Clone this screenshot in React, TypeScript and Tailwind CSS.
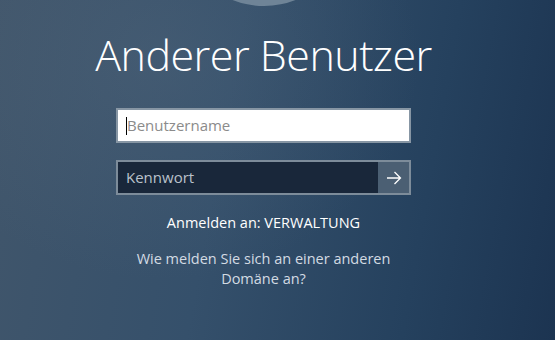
import React from 'react';

export default function App() {
  return (
    <div
      className="relative h-[340px] w-[555px] overflow-hidden text-white"
      style={{
        background:
          'radial-gradient(ellipse 260px 220px at 160px 60px, rgba(90,110,130,0.3), rgba(90,110,130,0) 100%), linear-gradient(100deg, #41566b 0%, #35506b 40%, #25415e 75%, #1c3451 100%)',
        fontFamily: '"Open Sans", "Noto Sans", sans-serif',
      }}
    >
      <div className="flex w-[527px] flex-col items-center">
        {/* avatar, mostly off screen */}
        <div className="-mt-[166px] h-[172px] w-[172px] shrink-0 rounded-full bg-[#6f8497]" />

        <h1 className="mt-[21px] text-[43px] font-light leading-[56px] tracking-[-0.5px] text-white">
          Anderer Benutzer
        </h1>

        <div className="mt-[25px] flex h-[35px] w-[295px] items-center border-2 border-[#8796a4] bg-white pl-[8px]">
          <span className="h-[18px] w-px bg-black" />
          <span className="text-[15px] text-[#8b8b8b]">Benutzername</span>
        </div>

        <div className="mt-[17px] flex h-[35px] w-[295px] border-2 border-[#7d8c9a] bg-[#19273a]">
          <div className="flex flex-1 items-center pl-[8px] text-[15px] text-[#b9c2cb]">Kennwort</div>
          <div className="flex w-[31px] items-center justify-center bg-[#4b5f73]">
            <svg width="16" height="14" viewBox="0 0 16 14" fill="none" stroke="white" strokeWidth="1.3">
              <path d="M1 7h13.5M8.5 1l6 6-6 6" />
            </svg>
          </div>
        </div>

        <p className="mt-[18px] text-[14.5px] leading-[20px] text-white">Anmelden an: VERWALTUNG</p>

        <p className="mt-[16px] w-[260px] text-center text-[14.5px] leading-[20px] text-[#d3dbe3]">
          Wie melden Sie sich an einer anderen Domäne an?
        </p>
      </div>
    </div>
  );
}
